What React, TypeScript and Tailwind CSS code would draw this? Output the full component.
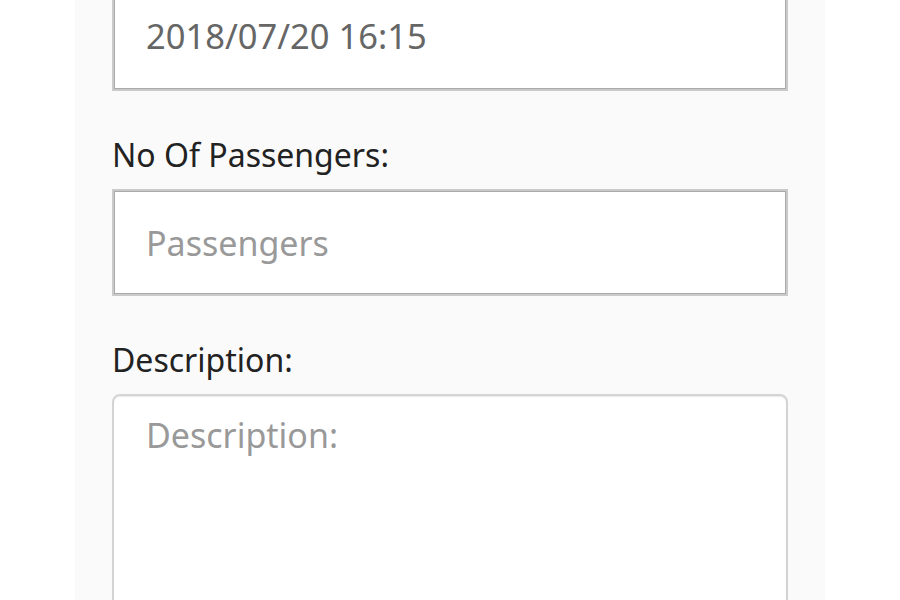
export default function App() {
  const font = { fontFamily: '"Noto Sans", "Open Sans", sans-serif' };
  return (
    <div className="flex h-[600px] w-[900px] justify-center overflow-hidden bg-white" style={font}>
      <div className="flex h-[600px] w-[750px] flex-col overflow-hidden bg-[#fafafa] px-[37px]">
        <div className="-mt-[16px] flex flex-col">
          <input
            readOnly
            value="2018/07/20 16:15"
            className="h-[107px] w-full border-2 border-[#cacaca] bg-white px-[32px] pb-[4px] text-[34.5px] text-[#666] shadow-[inset_1px_1px_0_#aaa,inset_-1px_-1px_0_#aaa] outline-none"
          />
          <label className="mt-[44px] text-[32px] leading-[40px] text-[#222]">No Of Passengers:</label>
          <input
            placeholder="Passengers"
            className="mt-[14px] h-[107px] w-full border-2 border-[#cacaca] bg-white px-[32px] text-[34px] text-[#666] shadow-[inset_1px_1px_0_#aaa,inset_-1px_-1px_0_#aaa] outline-none placeholder:text-[#999]"
          />
          <label className="mt-[44px] text-[32px] leading-[40px] text-[#222]">Description:</label>
          <textarea
            placeholder="Description:"
            className="mt-[14px] h-[260px] w-full shrink-0 resize-none rounded-[8px] border-2 border-[#d4d4d4] bg-white px-[32px] pt-[17px] text-[34px] leading-[44px] text-[#666] shadow-[inset_0_1px_1px_rgba(0,0,0,0.08)] outline-none placeholder:text-[#999]"
          />
        </div>
      </div>
    </div>
  );
}
